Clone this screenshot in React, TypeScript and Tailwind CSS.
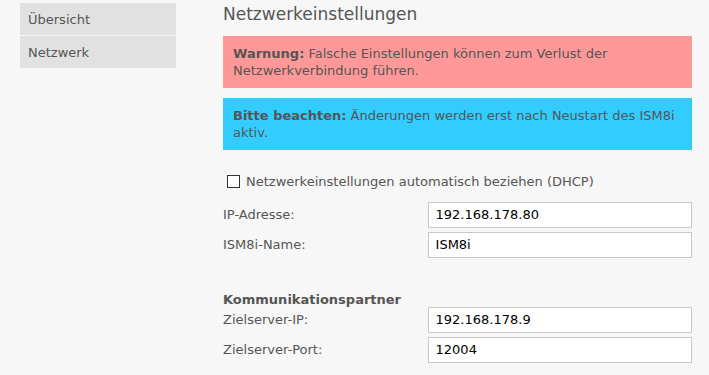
const fields1 = [
  { label: "IP-Adresse:", value: "192.168.178.80" },
  { label: "ISM8i-Name:", value: "ISM8i" },
];

const fields2 = [
  { label: "Zielserver-IP:", value: "192.168.178.9" },
  { label: "Zielserver-Port:", value: "12004" },
];

function Field({ label, value }: { label: string; value: string }) {
  return (
    <div className="flex items-center h-[26px]">
      <label className="w-[205px] text-[13px] text-[#555]">{label}</label>
      <input
        type="text"
        defaultValue={value}
        className="w-[265px] h-[26px] bg-white border border-[#c8c8c8] px-[7px] text-[13px] text-black outline-none"
      />
    </div>
  );
}

export default function App() {
  return (
    <div
      className="min-h-screen bg-[#f7f7f7] flex gap-[47px] pl-[20px] pt-[3px]"
      style={{ fontFamily: '"DejaVu Sans", Verdana, sans-serif' }}
    >
      <nav className="w-[156px] flex flex-col gap-[1px] text-[13px] text-[#555]">
        <div className="h-[32px] bg-[#e1e1e1] flex items-center px-[8px] pt-[1px]">Übersicht</div>
        <div className="h-[32px] bg-[#e1e1e1] flex items-center px-[8px] pt-[1px]">Netzwerk</div>
      </nav>

      <main className="w-[469px]">
        <h1 className="text-[17px] text-[#555] leading-[24px] mt-[-1px]">Netzwerkeinstellungen</h1>

        <div className="mt-[10px] h-[52px] bg-[#ff9999] px-[10px] py-[9px] text-[13px] leading-[17px] text-[#555]">
          <b>Warnung:</b> Falsche Einstellungen können zum Verlust der Netzwerkverbindung führen.
        </div>

        <div className="mt-[10px] h-[52px] bg-[#33ccff] px-[10px] py-[9px] text-[13px] leading-[17px] text-[#555]">
          <b>Bitte beachten:</b> Änderungen werden erst nach Neustart des ISM8i aktiv.
        </div>

        <label className="mt-[22px] ml-[4px] flex items-center gap-[6px] text-[13px] text-[#555]">
          <span className="w-[13px] h-[13px] border border-[#333] bg-white" />
          Netzwerkeinstellungen automatisch beziehen (DHCP)
        </label>

        <div className="mt-[10px] flex flex-col gap-[4px]">
          {fields1.map((f) => (
            <Field key={f.label} {...f} />
          ))}
        </div>

        <div className="mt-[34px] text-[13px] font-bold text-[#555] leading-[16px]">Kommunikationspartner</div>

        <div className="mt-[-1px] flex flex-col gap-[4px]">
          {fields2.map((f) => (
            <Field key={f.label} {...f} />
          ))}
        </div>
      </main>
    </div>
  );
}
